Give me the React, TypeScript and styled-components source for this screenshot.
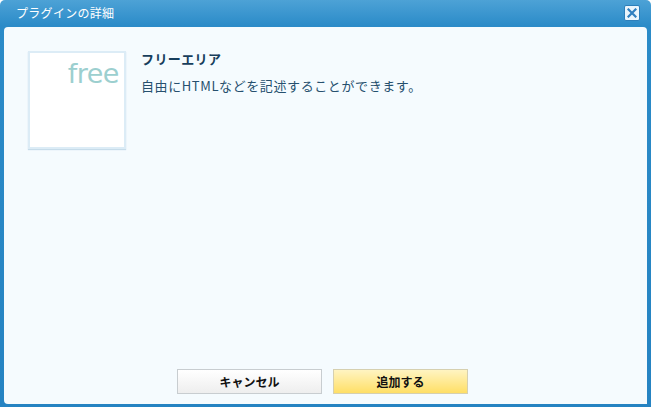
import styled, { createGlobalStyle } from "styled-components";

const GlobalStyle = createGlobalStyle`
  html, body {
    margin: 0;
    padding: 0;
    background: #ffffff;
  }
  body {
    font-family: "Noto Sans CJK JP", "Liberation Sans", sans-serif;
  }
`;

const Dialog = styled.div`
  width: 651px;
  height: 407px;
  box-sizing: border-box;
  display: flex;
  flex-direction: column;
  background: linear-gradient(#4da2d6 0px, #2b8bc8 26px, #2583c2 100%);
  border-radius: 5px 5px 0 0;
  padding: 0 4px 3px 4px;
`;

const TitleBar = styled.div`
  height: 27px;
  display: flex;
  align-items: center;
  justify-content: space-between;
  padding: 0 7px 2px 12px;
  box-sizing: border-box;
`;

const Title = styled.span`
  color: #ffffff;
  font-size: 12px;
  letter-spacing: 0.3px;
`;

const CloseButton = styled.button`
  width: 16px;
  height: 16px;
  padding: 0;
  border: 1px solid #2d7fba;
  border-radius: 2px;
  background: #eaf5fc;
  display: flex;
  align-items: center;
  justify-content: center;
  cursor: pointer;
`;

const Body = styled.div`
  flex: 1;
  background: #f5fbfe;
  border-radius: 4px 4px 0 4px;
  display: flex;
  flex-direction: column;
  padding: 24px 24px 10px 24px;
  box-sizing: border-box;
`;

const Plugin = styled.div`
  display: flex;
  gap: 15px;
  flex: 1;
`;

const Thumb = styled.div`
  width: 94px;
  height: 94px;
  background: #ffffff;
  border: 2px solid #dcecf6;
  box-shadow: 0 1px 1px #c6dcea;
  display: flex;
  justify-content: flex-end;
  align-items: flex-start;
  box-sizing: content-box;
`;

const ThumbText = styled.span`
  font-family: "DejaVu Sans", "Liberation Sans", sans-serif;
  font-size: 27px;
  color: #9ccfcf;
  line-height: 1;
  margin: 7px 5px 0 0;
  letter-spacing: -0.5px;
`;

const Info = styled.div`
  display: flex;
  flex-direction: column;
`;

const Name = styled.div`
  font-size: 13px;
  font-weight: bold;
  color: #173e5c;
  line-height: 16px;
  letter-spacing: 0.4px;
`;

const Desc = styled.div`
  font-size: 13px;
  color: #26506e;
  line-height: 16px;
  margin-top: 11px;
  letter-spacing: 0.6px;
`;

const Footer = styled.div`
  display: flex;
  justify-content: center;
  gap: 11px;
  padding-right: 6px;
`;

const Button = styled.button<{ $primary?: boolean }>`
  width: ${(p) => (p.$primary ? "135px" : "145px")};
  height: 25px;
  box-sizing: border-box;
  border: 1px solid ${(p) => (p.$primary ? "#d6d0b0" : "#c8cdd0")};
  background: ${(p) =>
    p.$primary
      ? "linear-gradient(#fff4c2, #ffdf66)"
      : "linear-gradient(#ffffff, #eeeeee)"};
  font-family: "Noto Sans CJK JP", "Liberation Sans", sans-serif;
  font-size: 12px;
  font-weight: bold;
  color: #111111;
  cursor: pointer;
  padding: 0;
`;

export default function App() {
  return (
    <>
      <GlobalStyle />
      <Dialog>
        <TitleBar>
          <Title>プラグインの詳細</Title>
          <CloseButton aria-label="close">
            <svg width="10" height="10" viewBox="0 0 10 10">
              <path
                d="M1.5 1.5 L8.5 8.5 M8.5 1.5 L1.5 8.5"
                stroke="#2f7fbf"
                strokeWidth="2.2"
                strokeLinecap="square"
              />
            </svg>
          </CloseButton>
        </TitleBar>
        <Body>
          <Plugin>
            <Thumb>
              <ThumbText>free</ThumbText>
            </Thumb>
            <Info>
              <Name>フリーエリア</Name>
              <Desc>自由にHTMLなどを記述することができます。</Desc>
            </Info>
          </Plugin>
          <Footer>
            <Button>キャンセル</Button>
            <Button $primary>追加する</Button>
          </Footer>
        </Body>
      </Dialog>
    </>
  );
}
